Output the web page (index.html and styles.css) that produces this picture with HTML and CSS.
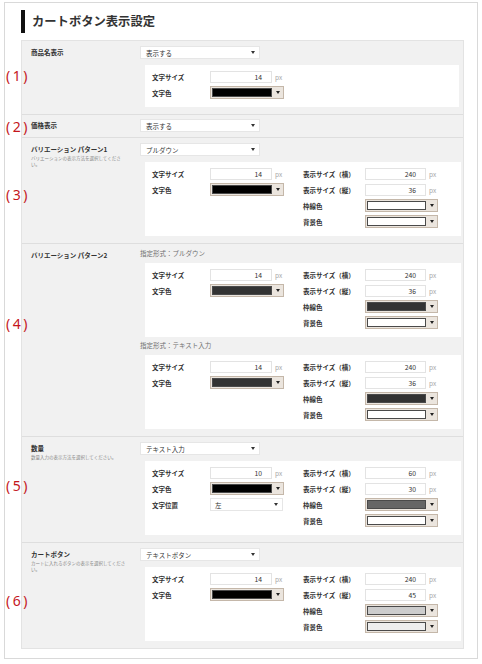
FILE: index.html
```html
<!DOCTYPE html>
<html lang="ja">
<head>
    <meta charset="UTF-8">
    <meta name="viewport" content="width=device-width, initial-scale=1.0">
    <title>カートボタン表示設定</title>
    <link rel="stylesheet" href="styles.css">
</head>
<body>
    <div class="page">
        <h1 class="title">カートボタン表示設定</h1>

        <div class="panel">
            <!-- 商品名表示 -->
            <div class="row">
                <span class="note note-1">(1)</span>
                <div class="row-head">
                    <div class="label">商品名表示</div>
                </div>
                <div class="row-body">
                    <div class="select">表示する<span class="caret"></span></div>
                    <div class="box">
                        <div class="col">
                            <div class="field"><span class="field-label">文字サイズ</span><span class="num">14</span><span class="unit">px</span></div>
                            <div class="field"><span class="field-label">文字色</span><span class="color"><span class="swatch sw-black"></span><span class="caret"></span></span></div>
                        </div>
                    </div>
                </div>
            </div>

            <!-- 価格表示 -->
            <div class="row row-plain">
                <span class="note note-2">(2)</span>
                <div class="row-head">
                    <div class="label">価格表示</div>
                </div>
                <div class="row-body">
                    <div class="select">表示する<span class="caret"></span></div>
                </div>
            </div>

            <!-- バリエーション パターン1 -->
            <div class="row">
                <span class="note note-3">(3)</span>
                <div class="row-head">
                    <div class="label">バリエーション パターン1</div>
                    <div class="hint">バリエーションの表示方法を選択してください。</div>
                </div>
                <div class="row-body">
                    <div class="select">プルダウン<span class="caret"></span></div>
                    <div class="box">
                        <div class="col">
                            <div class="field"><span class="field-label">文字サイズ</span><span class="num">14</span><span class="unit">px</span></div>
                            <div class="field"><span class="field-label">文字色</span><span class="color"><span class="swatch sw-black"></span><span class="caret"></span></span></div>
                        </div>
                        <div class="col col-right">
                            <div class="field"><span class="field-label">表示サイズ（横）</span><span class="num">240</span><span class="unit">px</span></div>
                            <div class="field"><span class="field-label">表示サイズ（縦）</span><span class="num">36</span><span class="unit">px</span></div>
                            <div class="field"><span class="field-label">枠線色</span><span class="color"><span class="swatch sw-white"></span><span class="caret"></span></span></div>
                            <div class="field"><span class="field-label">背景色</span><span class="color"><span class="swatch sw-white"></span><span class="caret"></span></span></div>
                        </div>
                    </div>
                </div>
            </div>

            <!-- バリエーション パターン2 -->
            <div class="row">
                <span class="note note-4">(4)</span>
                <div class="row-head">
                    <div class="label">バリエーション パターン2</div>
                </div>
                <div class="row-body">
                    <div class="subhead">指定形式：プルダウン</div>
                    <div class="box">
                        <div class="col">
                            <div class="field"><span class="field-label">文字サイズ</span><span class="num">14</span><span class="unit">px</span></div>
                            <div class="field"><span class="field-label">文字色</span><span class="color"><span class="swatch sw-dark"></span><span class="caret"></span></span></div>
                        </div>
                        <div class="col col-right">
                            <div class="field"><span class="field-label">表示サイズ（横）</span><span class="num">240</span><span class="unit">px</span></div>
                            <div class="field"><span class="field-label">表示サイズ（縦）</span><span class="num">36</span><span class="unit">px</span></div>
                            <div class="field"><span class="field-label">枠線色</span><span class="color"><span class="swatch sw-dark"></span><span class="caret"></span></span></div>
                            <div class="field"><span class="field-label">背景色</span><span class="color"><span class="swatch sw-white"></span><span class="caret"></span></span></div>
                        </div>
                    </div>
                    <div class="subhead">指定形式：テキスト入力</div>
                    <div class="box">
                        <div class="col">
                            <div class="field"><span class="field-label">文字サイズ</span><span class="num">14</span><span class="unit">px</span></div>
                            <div class="field"><span class="field-label">文字色</span><span class="color"><span class="swatch sw-dark"></span><span class="caret"></span></span></div>
                        </div>
                        <div class="col col-right">
                            <div class="field"><span class="field-label">表示サイズ（横）</span><span class="num">240</span><span class="unit">px</span></div>
                            <div class="field"><span class="field-label">表示サイズ（縦）</span><span class="num">36</span><span class="unit">px</span></div>
                            <div class="field"><span class="field-label">枠線色</span><span class="color"><span class="swatch sw-dark"></span><span class="caret"></span></span></div>
                            <div class="field"><span class="field-label">背景色</span><span class="color"><span class="swatch sw-white"></span><span class="caret"></span></span></div>
                        </div>
                    </div>
                </div>
            </div>

            <!-- 数量 -->
            <div class="row">
                <span class="note note-5">(5)</span>
                <div class="row-head">
                    <div class="label">数量</div>
                    <div class="hint">数量入力の表示方法を選択してください。</div>
                </div>
                <div class="row-body">
                    <div class="select">テキスト入力<span class="caret"></span></div>
                    <div class="box">
                        <div class="col">
                            <div class="field"><span class="field-label">文字サイズ</span><span class="num">10</span><span class="unit">px</span></div>
                            <div class="field"><span class="field-label">文字色</span><span class="color"><span class="swatch sw-black"></span><span class="caret"></span></span></div>
                            <div class="field"><span class="field-label">文字位置</span><span class="select select-small">左<span class="caret"></span></span></div>
                        </div>
                        <div class="col col-right">
                            <div class="field"><span class="field-label">表示サイズ（横）</span><span class="num">60</span><span class="unit">px</span></div>
                            <div class="field"><span class="field-label">表示サイズ（縦）</span><span class="num">30</span><span class="unit">px</span></div>
                            <div class="field"><span class="field-label">枠線色</span><span class="color"><span class="swatch sw-gray"></span><span class="caret"></span></span></div>
                            <div class="field"><span class="field-label">背景色</span><span class="color"><span class="swatch sw-white"></span><span class="caret"></span></span></div>
                        </div>
                    </div>
                </div>
            </div>

            <!-- カートボタン -->
            <div class="row">
                <span class="note note-6">(6)</span>
                <div class="row-head">
                    <div class="label">カートボタン</div>
                    <div class="hint">カートに入れるボタンの表示を選択してください。</div>
                </div>
                <div class="row-body">
                    <div class="select">テキストボタン<span class="caret"></span></div>
                    <div class="box">
                        <div class="col">
                            <div class="field"><span class="field-label">文字サイズ</span><span class="num">14</span><span class="unit">px</span></div>
                            <div class="field"><span class="field-label">文字色</span><span class="color"><span class="swatch sw-black"></span><span class="caret"></span></span></div>
                        </div>
                        <div class="col col-right">
                            <div class="field"><span class="field-label">表示サイズ（横）</span><span class="num">240</span><span class="unit">px</span></div>
                            <div class="field"><span class="field-label">表示サイズ（縦）</span><span class="num">45</span><span class="unit">px</span></div>
                            <div class="field"><span class="field-label">枠線色</span><span class="color"><span class="swatch sw-silver"></span><span class="caret"></span></span></div>
                            <div class="field"><span class="field-label">背景色</span><span class="color"><span class="swatch sw-light"></span><span class="caret"></span></span></div>
                        </div>
                    </div>
                </div>
            </div>
        </div>
    </div>
</body>
</html>
```

FILE: styles.css
```css
/* General */
body {
    margin: 0;
    background-color: #fff;
    color: #333;
    font-family: "Noto Sans CJK JP", "Noto Sans", sans-serif;
}

.page {
    margin: 2px 4px 0;
    border: 1px solid #d9d9d9;
    padding: 7px 13px 9px 16px;
}

.title {
    margin: 0 0 7px;
    height: 23px;
    line-height: 23px;
    border-left: 4px solid #111;
    padding-left: 7px;
    font-size: 12.3px;
    font-weight: bold;
    color: #333;
}

/* Panel */
.panel {
    background-color: #f1f1f1;
    border: 1px solid #e3e3e3;
}

.row {
    position: relative;
    display: flex;
    padding: 5px 4px 7px 9px;
}

.row + .row {
    border-top: 1px solid #dedede;
}

.row-plain {
    padding-top: 4px;
    padding-bottom: 5px;
}

.row-head {
    width: 96px;
    margin-right: 13px;
    flex-shrink: 0;
}

.label {
    font-size: 6.5px;
    line-height: 13px;
    font-weight: bold;
    color: #333;
}

.hint {
    font-size: 4.5px;
    line-height: 5.5px;
    color: #888;
}

.row-body {
    flex: 1;
    display: flex;
    flex-direction: column;
    gap: 6px;
}

.subhead {
    font-size: 6.5px;
    line-height: 8px;
    color: #6f6f6f;
}

.box + .subhead {
    margin-top: -2px;
}

/* Select */
.select {
    box-sizing: border-box;
    width: 120px;
    height: 13px;
    display: flex;
    align-items: center;
    justify-content: space-between;
    padding: 0 4px 0 5px;
    background-color: #fff;
    border: 1px solid #e6e6e6;
    font-size: 6.5px;
    color: #333;
}

.select-small {
    width: 73px;
    padding-left: 4px;
}

.caret {
    width: 0;
    height: 0;
    border-left: 2px solid transparent;
    border-right: 2px solid transparent;
    border-top: 3px solid #333;
}

/* Box */
.box {
    margin-left: 5px;
    background-color: #fff;
    padding: 5px 7px 8px;
    display: flex;
}

.col {
    width: 151px;
    display: flex;
    flex-direction: column;
    gap: 3px;
}

.field {
    display: flex;
    align-items: center;
    height: 13px;
    font-size: 6.5px;
}

.field-label {
    width: 58px;
    font-weight: bold;
    color: #333;
}

.col-right .field-label {
    width: 62px;
}

.num {
    box-sizing: border-box;
    width: 62px;
    height: 12px;
    line-height: 10px;
    padding-right: 9px;
    text-align: right;
    border: 1px solid #e3e3e3;
    background-color: #fff;
    font-size: 6.8px;
    color: #333;
}

.col-right .num {
    width: 61px;
}

.unit {
    margin-left: 3px;
    color: #a5a5a5;
    font-size: 6.5px;
}

/* Color picker */
.color {
    box-sizing: border-box;
    width: 74px;
    height: 13px;
    display: flex;
    align-items: center;
    padding: 1px 0 1px 1px;
    border: 1px solid #c4b7a9;
    background-color: #ebe5de;
}

.col-right .color {
    width: 73px;
}

.color .caret {
    margin: 0 3px 0 4px;
    border-top-color: #222;
}

.swatch {
    flex: 1;
    align-self: stretch;
    border: 1px solid #4a4a4a;
}

.sw-black { background-color: #000; }
.sw-dark { background-color: #333; }
.sw-gray { background-color: #666; }
.sw-white { background-color: #fff; }
.sw-silver { background-color: #ccc; }
.sw-light { background-color: #eee; }

/* Annotations */
.note {
    position: absolute;
    left: -16px;
    font-family: "Noto Sans", sans-serif;
    font-size: 14px;
    line-height: 14px;
    letter-spacing: 2.5px;
    color: #c4161c;
}

.note-1 { top: 28px; }
.note-2 { top: 5px; }
.note-3 { top: 50px; }
.note-4 { top: 73px; }
.note-5 { top: 42px; }
.note-6 { top: 51px; }
```
